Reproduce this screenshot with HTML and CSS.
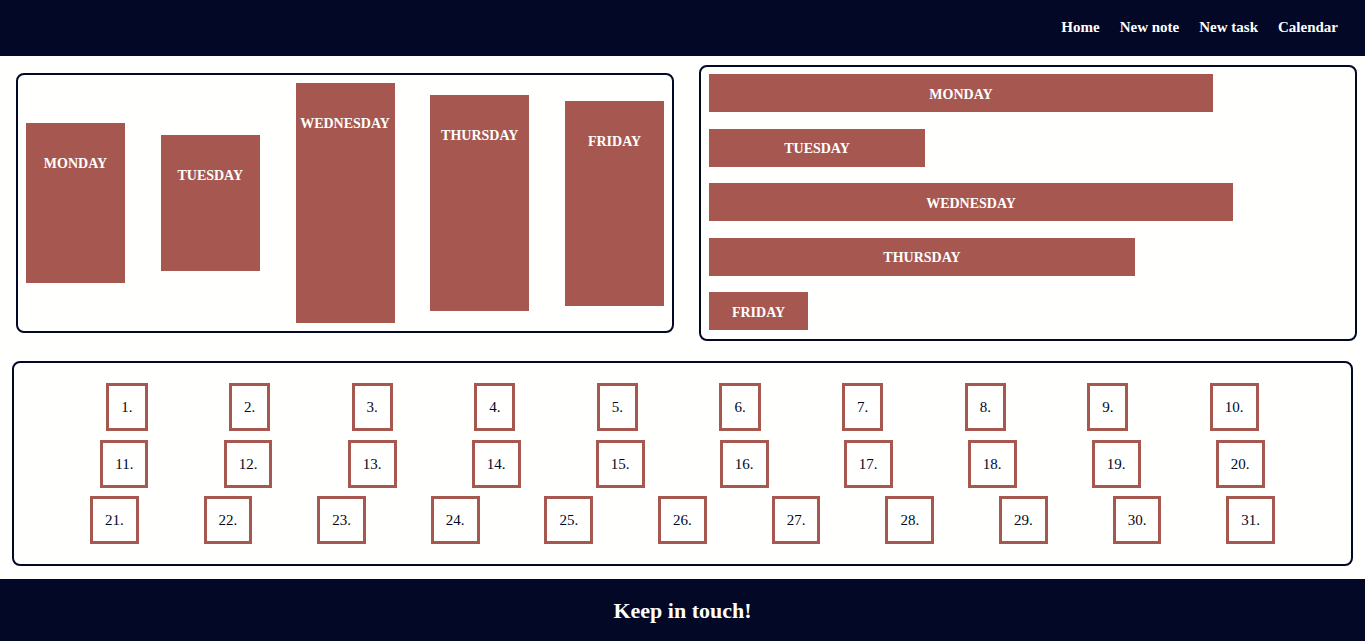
FILE: index.html
```html
<!DOCTYPE html>
<html lang="en">
<head>
  <meta charset="UTF-8" />
  <meta name="viewport" content="width=device-width, initial-scale=1.0"/>
  <title>Planner</title>
  <link rel="stylesheet" href="styles.css">
</head>
<body>

  <header class="topbar">
    <nav class="nav">
      <a href="#">Home</a>
      <a href="#">New note</a>
      <a href="#">New task</a>
      <a href="#">Calendar</a>
    </nav>
  </header>

  <main>
    <div class="charts">
      <div class="card chart-v">
        <div class="vbar" style="height:160px">MONDAY</div>
        <div class="vbar" style="height:136px">TUESDAY</div>
        <div class="vbar" style="height:240px">WEDNESDAY</div>
        <div class="vbar" style="height:216px">THURSDAY</div>
        <div class="vbar" style="height:205px">FRIDAY</div>
      </div>
      <div class="card chart-h">
        <div class="hbar" style="width:504px">MONDAY</div>
        <div class="hbar" style="width:216px">TUESDAY</div>
        <div class="hbar" style="width:524px">WEDNESDAY</div>
        <div class="hbar" style="width:426px">THURSDAY</div>
        <div class="hbar" style="width:99px">FRIDAY</div>
      </div>
    </div>

    <div class="card month">
      <div class="week">
        <span class="day">1.</span><span class="day">2.</span><span class="day">3.</span><span class="day">4.</span><span class="day">5.</span>
        <span class="day">6.</span><span class="day">7.</span><span class="day">8.</span><span class="day">9.</span><span class="day">10.</span>
      </div>
      <div class="week">
        <span class="day">11.</span><span class="day">12.</span><span class="day">13.</span><span class="day">14.</span><span class="day">15.</span>
        <span class="day">16.</span><span class="day">17.</span><span class="day">18.</span><span class="day">19.</span><span class="day">20.</span>
      </div>
      <div class="week">
        <span class="day">21.</span><span class="day">22.</span><span class="day">23.</span><span class="day">24.</span><span class="day">25.</span>
        <span class="day">26.</span><span class="day">27.</span><span class="day">28.</span><span class="day">29.</span><span class="day">30.</span>
        <span class="day">31.</span>
      </div>
    </div>
  </main>

  <footer class="footer">Keep in touch!</footer>

</body>
</html>
```

FILE: styles.css
```css
body {
  font-family: 'Liberation Serif', serif;
  background: #fffffe;
  color: #020826;
  margin: 0;
}
.topbar {
  background: #020826;
  height: 56px;
  display: flex;
  align-items: center;
  justify-content: flex-end;
  padding-right: 27px;
}
.nav {
  display: flex;
  gap: 20px;
  margin-top: -1px;
}
.nav a {
  color: #fffffe;
  text-decoration: none;
  font-size: 15px;
  font-weight: bold;
}
.card {
  box-sizing: border-box;
  border: 2px solid #020826;
  border-radius: 8px;
  background: #fffffe;
}
.charts {
  display: flex;
  align-items: center;
  gap: 25px;
  margin-top: 9px;
  padding: 0 8px 0 16px;
}
.chart-v {
  width: 658px;
  padding: 8px;
  display: flex;
  align-items: center;
  justify-content: space-between;
}
.vbar {
  width: 99px;
  background: #a65850;
  color: #fffffe;
  font-size: 14px;
  font-weight: bold;
  text-align: center;
  line-height: 18px;
  padding-top: 32px;
  box-sizing: border-box;
}
.chart-h {
  width: 658px;
  padding: 7px 8px 9px;
  display: flex;
  flex-direction: column;
  gap: 16.5px;
}
.hbar {
  box-sizing: border-box;
  height: 38px;
  padding-top: 3px;
  display: flex;
  align-items: center;
  justify-content: center;
  background: #a65850;
  color: #fffffe;
  font-size: 14px;
  font-weight: bold;
}
.month {
  margin: 20px 12px 0;
  padding: 20px 11px;
  display: flex;
  flex-direction: column;
  gap: 8.5px;
}
.week {
  display: flex;
  justify-content: space-evenly;
}
.day {
  border: 3px solid #a65850;
  padding: 12px;
  font-size: 15px;
  line-height: 18px;
  color: #020826;
}
.footer {
  margin-top: 13px;
  height: 62px;
  background: #020826;
  color: #fffffe;
  display: flex;
  align-items: center;
  justify-content: center;
  font-size: 22px;
  font-weight: bold;
  padding-top: 2px;
  box-sizing: border-box;
}
```
